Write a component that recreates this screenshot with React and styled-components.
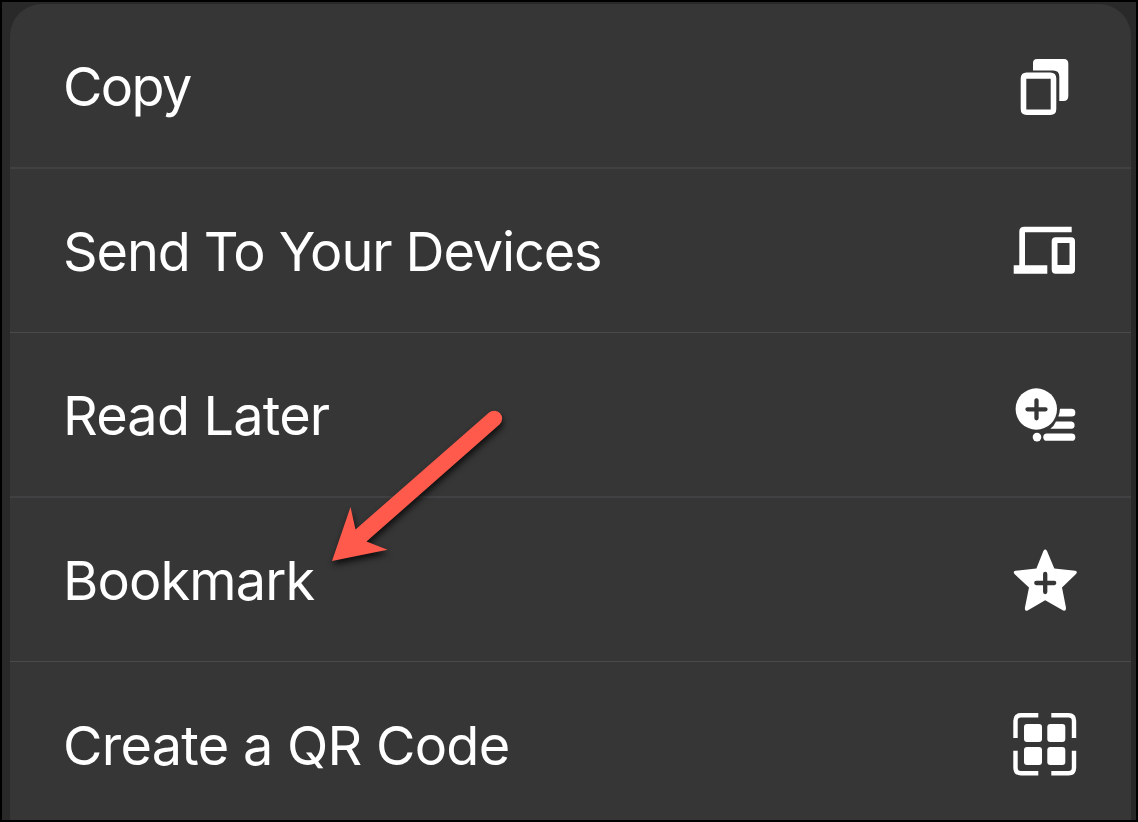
import React from 'react'
import styled, { createGlobalStyle } from 'styled-components'

const App = () => {
  return (
    <>
      <GlobalStyle />
      <Screen>
        <Menu>
          <MenuItem>
            <Label $tracking={-1.6}>Copy</Label>
            <Icon viewBox="12 7.5 66 66">
              <path d="M33 25V17.5Q33 13.4 37 13.4H64Q68.3 13.4 68.3 18V50.5Q68.3 55.5 63.5 55.5H59.3V31Q59.3 25 53.3 25Z" />
              <path fillRule="evenodd" d="M26.7 27H50.3Q56.3 27 56.3 33V63.5Q56.3 69.4 50.3 69.4H26.7Q20.7 69.4 20.7 63.5V33Q20.7 27 26.7 27ZM26.3 33.3V64H50.7V33.3Z" />
            </Icon>
          </MenuItem>
          <MenuItem>
            <Label $tracking={-1.1}>Send To Your Devices</Label>
            <Icon viewBox="12 7 66 66">
              <path d="M13.7 55.3H19.3V21.5Q19.3 16.7 24.2 16.7H71.7V22.3H25V55.3H47.3V63.8H13.7Z" />
              <path fillRule="evenodd" d="M55.7 27.3H71Q75 27.3 75 31.3V59.5Q75 63.8 71 63.8H55.7Q51.7 63.8 51.7 59.5V31.3Q51.7 27.3 55.7 27.3ZM57.5 33V55H69.5V33Z" />
            </Icon>
          </MenuItem>
          <MenuItem>
            <Label $tracking={-0.8}>Read Later</Label>
            <Icon viewBox="12 6.5 66 66">
              <path d="M60 33.3H71.5A3.8 3.8 0 0 1 71.5 41H58.3Q59.8 37.3 60 33.3ZM56 46H71.5A3.7 3.7 0 0 1 71.5 53.3H50.3Q54 50.7 56 46Z" />
              <circle cx="36.3" cy="33.5" r="20.7" />
              <circle cx="37" cy="61.6" r="4.3" />
              <rect x="43.3" y="58" width="32" height="7.3" rx="3.65" />
              <Plus d="M36.5 24.8V42.8M27.5 33.8H45.5" />
            </Icon>
          </MenuItem>
          <MenuItem>
            <Label $tracking={-0.85}>Bookmark</Label>
            <Icon viewBox="12 6 66 66">
              <path d="M43.4 10.9Q45.2 8.2 47 10.9L54.3 28.6L75.3 30.8Q78 31.5 76 34L62 47.5L66 67.7Q66.2 71.3 63.2 70.5L45.2 60.3L27.6 70.5Q24.5 71.5 24.9 67.7L29 47.5L14.5 34Q12.5 31.5 15.5 30.8L36.4 28.6Z" />
              <Plus d="M45.2 34V52M36.3 43H54.2" />
            </Icon>
          </MenuItem>
          <MenuItem>
            <Label $tracking={-0.73}>Create a QR Code</Label>
            <Icon viewBox="12 11 66 66">
              <Corners d="M38.3 15.2H21Q15.5 15.2 15.5 20.7V38M51.3 15.2H68.5Q74 15.2 74 20.7V38M15.5 50.7V67.7Q15.5 73.2 21 73.2H38.3M51.3 73.2H68.5Q74 73.2 74 67.7V50.7" />
              <rect x="24" y="24" width="18" height="18" rx="3" />
              <rect x="47.3" y="24" width="18" height="18" rx="3" />
              <rect x="24" y="47" width="18" height="18" rx="3" />
              <rect x="47.3" y="47" width="18" height="18" rx="3" />
            </Icon>
          </MenuItem>
        </Menu>
        <Arrow viewBox="320 400 200 180">
          <path d="M332 561L350.5 507L355.5 529.5L488.8 412.7A8 8 0 0 1 499.5 424.6L366.5 541.5L387.5 549.8Z" />
        </Arrow>
      </Screen>
    </>
  )
}

export default App

const GlobalStyle = createGlobalStyle`
  body{
    margin: 0;
    background: #000;
  }
`

const Screen = styled.div`
  position: relative;
  box-sizing: border-box;
  width: 1138px;
  height: 822px;
  padding: 2px 5px 0 8px;
  border: 2px solid #000;
  background: #292929;
  overflow: hidden;
`

const Menu = styled.ul`
  display: grid;
  grid-template-rows: 165px 164px 165px 164px 164px;
  height: 816px;
  margin: 0;
  padding: 0;
  list-style: none;
  background: #363637;
  border-radius: 32px 32px 0 0;
  overflow: hidden;
`

const MenuItem = styled.li`
  display: flex;
  align-items: center;
  justify-content: space-between;
  padding: 0 53px;
  border-bottom: 2px solid #414143;
  &:nth-child(even){
    padding-bottom: 1px;
    border-bottom: 1px solid #4a4a4c;
  }
  &:last-child{
    border-bottom: none;
  }
`

const Label = styled.span`
  padding-top: 3px;
  color: #fff;
  font-family: Inter, 'Liberation Sans', sans-serif;
  font-size: 54px;
  font-weight: 400;
  line-height: 66px;
  letter-spacing: ${props => props.$tracking}px;
  white-space: nowrap;
`

const Icon = styled.svg`
  flex: none;
  width: 66px;
  height: 66px;
  fill: #fff;
`

const Plus = styled.path`
  fill: none;
  stroke: #363637;
  stroke-width: 4.3px;
  stroke-linecap: round;
`

const Corners = styled.path`
  fill: none;
  stroke: #fff;
  stroke-width: 4.4px;
`

const Arrow = styled.svg`
  position: absolute;
  left: 318px;
  top: 398px;
  width: 200px;
  height: 180px;
  overflow: visible;
  fill: #ff5a4c;
  filter: drop-shadow(1px 4px 3px rgba(0, 0, 0, 0.75));
`
